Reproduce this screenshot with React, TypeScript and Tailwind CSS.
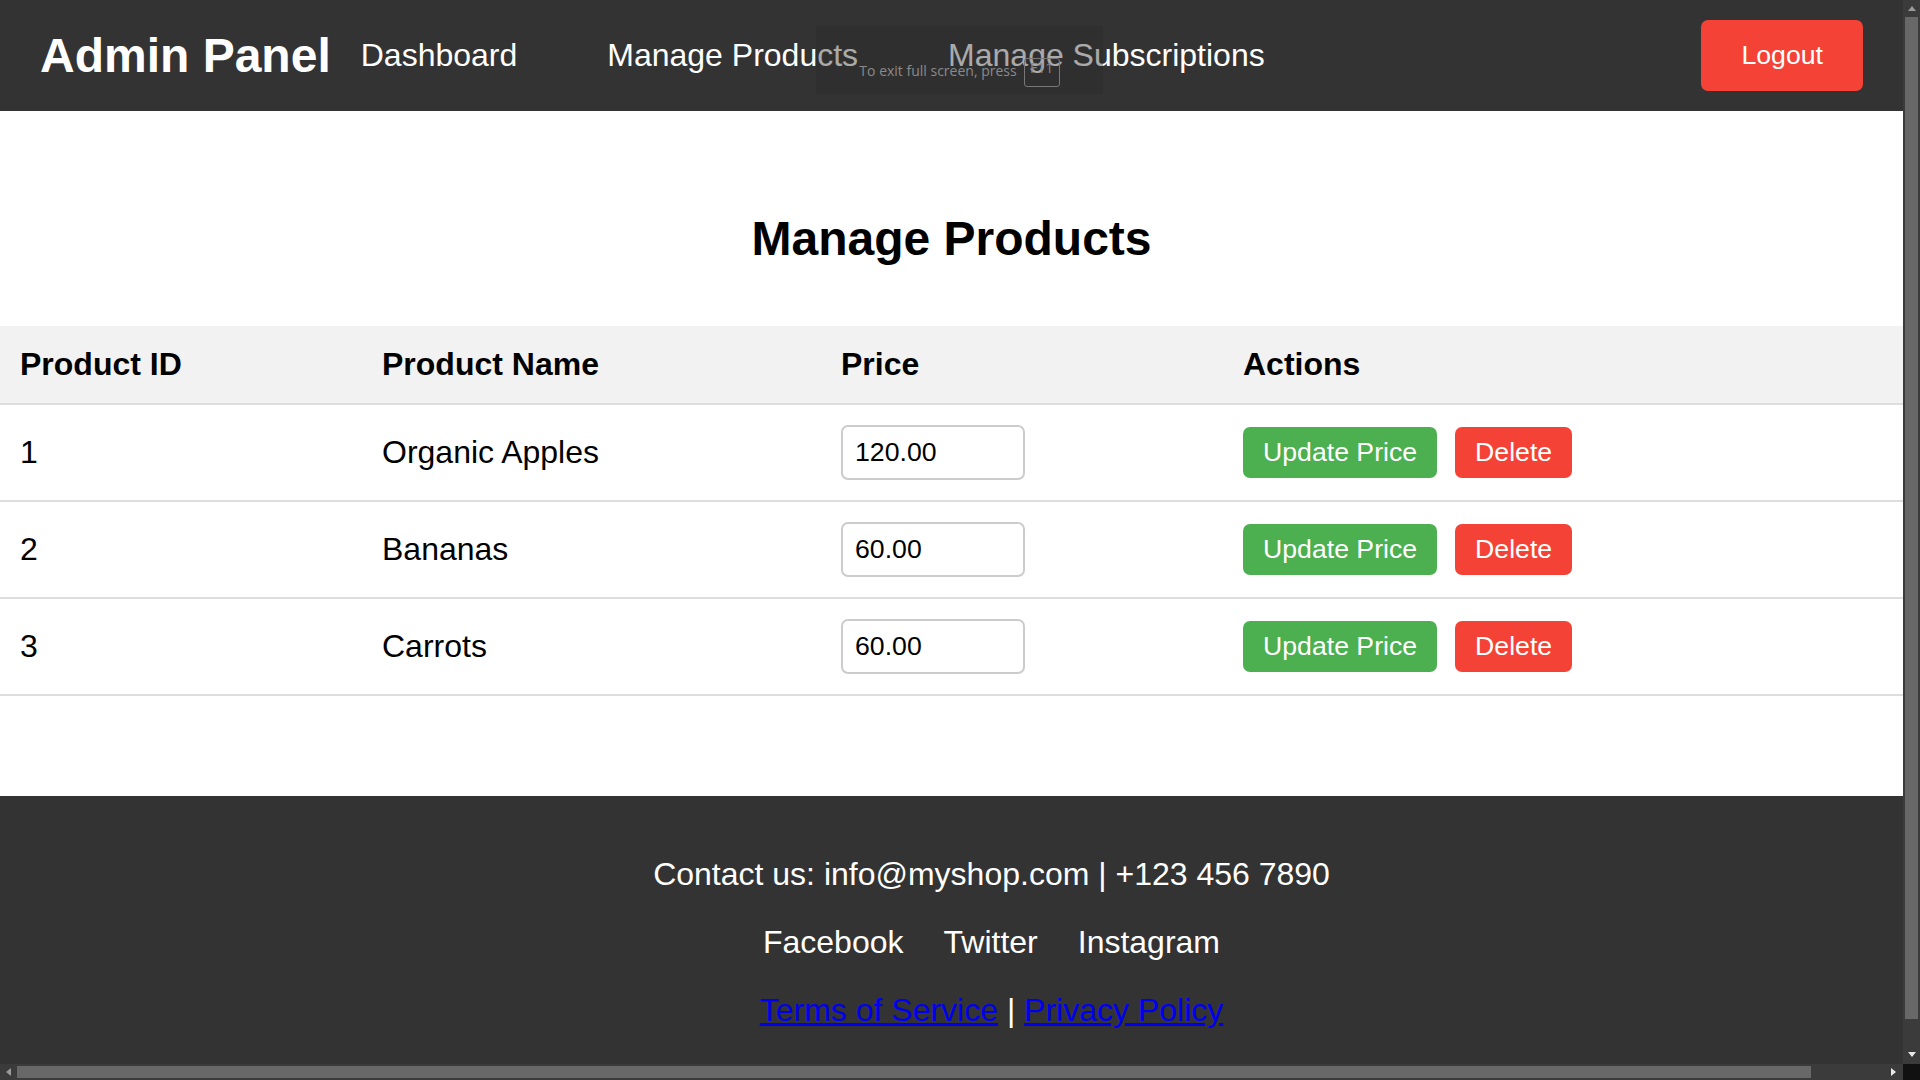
import React from "react";

const products = [
  { id: 1, name: "Organic Apples", price: "120.00" },
  { id: 2, name: "Bananas", price: "60.00" },
  { id: 3, name: "Carrots", price: "60.00" },
];

function Tri({ dir, color }: { dir: "up" | "down" | "left" | "right"; color: string }) {
  const pts: Record<string, string> = {
    up: "0,6 4,1 8,6",
    down: "0,1 8,1 4,6",
    left: "6,0 6,8 1,4",
    right: "1,0 1,8 6,4",
  };
  return (
    <svg width="8" height="8" viewBox="0 0 8 8">
      <polygon points={pts[dir]} fill={color} />
    </svg>
  );
}

export default function App() {
  return (
    <div className="w-[1920px] h-[1080px] flex flex-col overflow-hidden bg-[#333333] font-['Liberation_Sans',Arial,sans-serif]">
      <div className="flex flex-1 min-h-0">
        {/* page */}
        <div className="w-[1903px] shrink-0 flex flex-col overflow-hidden bg-white">
          <header className="relative h-[111px] shrink-0 bg-[#333333] flex items-center px-[40px] text-white">
            <h1 className="text-[48px] font-bold leading-[55px]">Admin Panel</h1>
            <nav className="ml-[30px] flex items-center gap-[90px] text-[32px] leading-[37px]">
              <a>Dashboard</a>
              <a>Manage Products</a>
              <a>Manage Subscriptions</a>
            </nav>
            <button className="ml-auto bg-[#f44336] text-white text-[26.67px] leading-[31px] px-[40px] py-[20px] rounded-[7px]">
              Logout
            </button>
            {/* fullscreen hint overlay */}
            <div className="absolute left-[816px] top-[26px] w-[287px] h-[68px] bg-[#2a2a2a]/40 flex items-start justify-center pt-[35px] gap-[7px] font-['Open_Sans','Noto_Sans',sans-serif]">
              <span className="text-[14px] leading-[20px] text-[#8a8a8a]">To exit full screen, press</span>
              <span className="-mt-[3px] w-[36px] h-[29px] border border-[#777] rounded-[3px] text-[14px] leading-[18px] text-[#8a8a8a] text-center">F11</span>
            </div>
          </header>

          <main className="shrink-0 bg-white pt-[100px] pb-[100px]">
            <h2 className="text-[48px] font-bold leading-[55px] text-center text-black mb-[60px]">Manage Products</h2>
            <table className="w-full border-collapse text-black table-fixed">
              <thead>
                <tr className="bg-[#f2f2f2] border-b-2 border-[#dddddd]">
                  <th className="w-[362px] text-left px-[20px] py-[20px] text-[32px] leading-[37px] font-bold">Product ID</th>
                  <th className="w-[459px] text-left px-[20px] py-[20px] text-[32px] leading-[37px] font-bold">Product Name</th>
                  <th className="w-[402px] text-left px-[20px] py-[20px] text-[32px] leading-[37px] font-bold">Price</th>
                  <th className="text-left px-[20px] py-[20px] text-[32px] leading-[37px] font-bold">Actions</th>
                </tr>
              </thead>
              <tbody>
                {products.map((p) => (
                  <tr key={p.id} className="border-b-2 border-[#dddddd]">
                    <td className="px-[20px] py-[20px] text-[32px] leading-[37px] align-middle">{p.id}</td>
                    <td className="px-[20px] py-[20px] text-[32px] leading-[37px] align-middle">{p.name}</td>
                    <td className="px-[20px] py-[20px] align-middle">
                      <input
                        defaultValue={p.price}
                        className="block w-[184px] h-[55px] border-2 border-[#cccccc] rounded-[7px] px-[12px] text-[26.67px] text-black outline-none"
                      />
                    </td>
                    <td className="px-[20px] py-[20px] align-middle">
                      <div className="flex items-center gap-[18px]">
                        <button className="bg-[#4caf50] text-white text-[26.67px] leading-[31px] px-[20px] py-[10px] rounded-[7px]">
                          Update Price
                        </button>
                        <button className="bg-[#f44336] text-white text-[26.67px] leading-[31px] px-[20px] py-[10px] rounded-[7px]">
                          Delete
                        </button>
                      </div>
                    </td>
                  </tr>
                ))}
              </tbody>
            </table>
          </main>

          <footer className="w-[1983px] shrink-0 bg-[#333333] text-white text-center text-[32px] leading-[37px] pt-[60px] pb-[60px] flex flex-col items-center gap-[31px]">
            <p>Contact us: info@myshop.com | +123 456 7890</p>
            <div className="flex items-center gap-[40px]">
              <a>Facebook</a>
              <a>Twitter</a>
              <a>Instagram</a>
            </div>
            <p>
              <a className="text-[#0000ee] underline">Terms of Service</a> |{" "}
              <a className="text-[#0000ee] underline">Privacy Policy</a>
            </p>
          </footer>
        </div>

        {/* vertical scrollbar */}
        <div className="w-[17px] shrink-0 bg-[#3b3b3b] flex flex-col items-center">
          <div className="h-[17px] flex items-center justify-center">
            <Tri dir="up" color="#9a9a9a" />
          </div>
          <div className="w-[13px] h-[1002px] bg-[#686868]" />
          <div className="flex-1 flex items-end justify-center pb-[5px]">
            <Tri dir="down" color="#e8e8e8" />
          </div>
        </div>
      </div>

      {/* horizontal scrollbar */}
      <div className="h-[16px] shrink-0 flex">
        <div className="w-[1903px] bg-[#3b3b3b] flex items-center">
          <div className="w-[17px] h-full flex items-center justify-center">
            <Tri dir="left" color="#9a9a9a" />
          </div>
          <div className="w-[1794px] h-[12px] bg-[#686868]" />
          <div className="flex-1 flex items-center justify-end pr-[5px]">
            <Tri dir="right" color="#e8e8e8" />
          </div>
        </div>
        <div className="w-[17px] bg-[#111111]" />
      </div>
    </div>
  );
}
